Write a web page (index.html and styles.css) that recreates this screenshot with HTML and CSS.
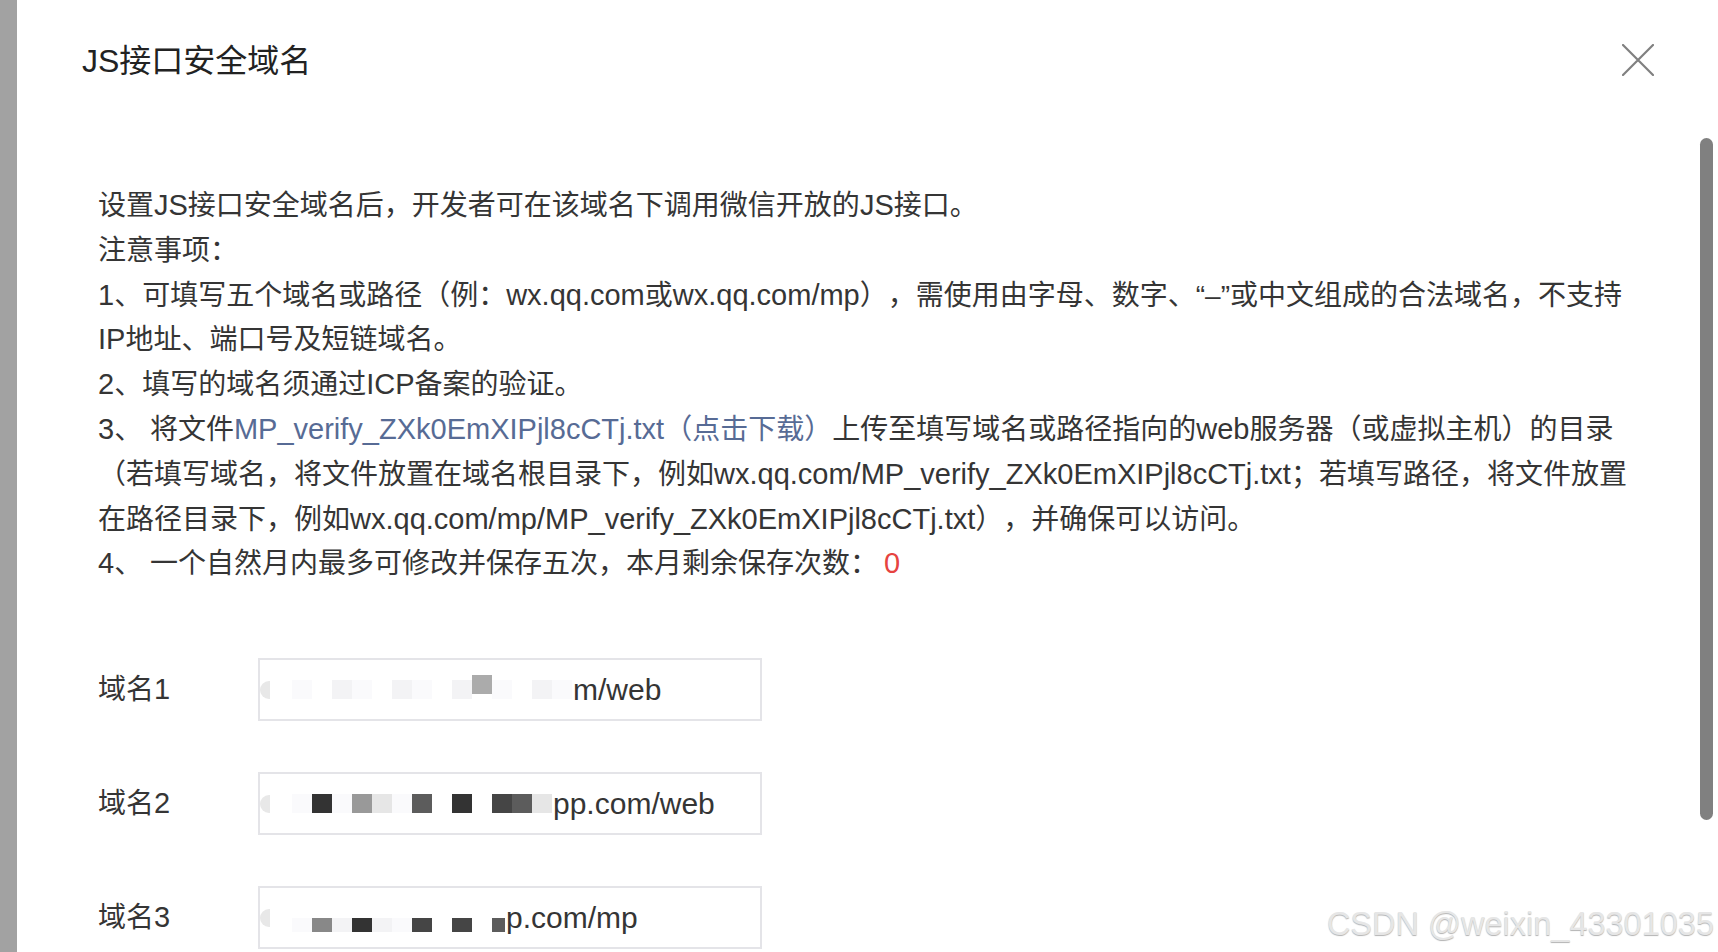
FILE: index.html
```html
<!DOCTYPE html>
<html lang="zh-CN">
<head>
  <meta charset="UTF-8">
  <title>JS接口安全域名</title>
  <link rel="stylesheet" href="styles.css">
</head>
<body>
  <div class="screen">
    <div class="backdrop"></div>

    <div class="dialog">
      <div class="dialog-head">
        <h2 class="dialog-title">JS接口安全域名</h2>
        <span class="close" title="关闭">
          <svg width="32" height="32" viewBox="0 0 32 32">
            <path d="M1 1 L31 31 M31 1 L1 31" stroke="#808080" stroke-width="2.2" stroke-linecap="round" fill="none"/>
          </svg>
        </span>
      </div>

      <div class="dialog-body">
        <div class="notes">
          <p>设置<span class="en">JS</span>接口安全域名后，开发者可在该域名下调用微信开放的<span class="en">JS</span>接口。</p>
          <p>注意事项：</p>
          <p><span class="en">1</span>、可填写五个域名或路径（例：<span class="en">wx.qq.com</span>或<span class="en">wx.qq.com/mp</span>），需使用由字母、数字、“–”或中文组成的合法域名，不支持<br><span class="en">IP</span>地址、端口号及短链域名。</p>
          <p><span class="en">2</span>、填写的域名须通过<span class="en">ICP</span>备案的验证。</p>
          <p><span class="en">3</span>、 将文件<a class="link" href="#"><span class="en">MP_verify_ZXk0EmXIPjl8cCTj.txt</span>（点击下载）</a>上传至填写域名或路径指向的<span class="en">web</span>服务器（或虚拟主机）的目录<br>（若填写域名，将文件放置在域名根目录下，例如<span class="en">wx.qq.com/MP_verify_ZXk0EmXIPjl8cCTj.txt</span>；若填写路径，将文件放置<br>在路径目录下，例如<span class="en">wx.qq.com/mp/MP_verify_ZXk0EmXIPjl8cCTj.txt</span>），并确保可以访问。</p>
          <p><span class="en">4</span>、 一个自然月内最多可修改并保存五次，本月剩余保存次数：<span class="count">0</span></p>
        </div>

        <div class="domains">
          <div class="domain-row">
            <label class="domain-label">域名<span class="en">1</span></label>
            <div class="domain-input">
              <span class="blob"></span>
              <span class="cell c0"></span><span class="cell c1"></span><span class="cell c0"></span><span class="cell c2"></span><span class="cell c1"></span><span class="cell c0"></span><span class="cell c2"></span><span class="cell c1"></span><span class="cell c0"></span><span class="cell c2"></span><span class="cell c5 up"></span><span class="cell c1"></span><span class="cell c0"></span><span class="cell c2"></span><span class="cell c1"></span>
              <span class="value">m/web</span>
            </div>
          </div>

          <div class="domain-row">
            <label class="domain-label">域名<span class="en">2</span></label>
            <div class="domain-input">
              <span class="blob"></span>
              <span class="cell c0"></span><span class="cell c1"></span><span class="cell c3"></span><span class="cell c1"></span><span class="cell c6"></span><span class="cell c9"></span><span class="cell c1"></span><span class="cell c7"></span><span class="cell c0"></span><span class="cell c3"></span><span class="cell c0"></span><span class="cell c4"></span><span class="cell c7"></span><span class="cell c9"></span>
              <span class="value">pp.com/web</span>
            </div>
          </div>

          <div class="domain-row">
            <label class="domain-label">域名<span class="en">3</span></label>
            <div class="domain-input">
              <span class="blob"></span>
              <span class="cell c0 low"></span><span class="cell c1 low"></span><span class="cell c8 low"></span><span class="cell c2 low"></span><span class="cell c3 low"></span><span class="cell c2 low"></span><span class="cell c1 low"></span><span class="cell c4 low"></span><span class="cell c0 low"></span><span class="cell c4 low"></span><span class="cell c0 low"></span><span class="cell c7 low narrow"></span>
              <span class="value">p.com/mp</span>
            </div>
          </div>
        </div>
      </div>

      <div class="scrollbar"></div>
      <div class="watermark">CSDN @weixin_43301035</div>
    </div>
  </div>
</body>
</html>
```

FILE: styles.css
```css
body {
  margin: 0;
  font-family: "Liberation Sans", "Noto Sans CJK SC", sans-serif;
  color: #353535;
  background: #fff;
  text-spacing-trim: space-all;
}

.screen {
  display: flex;
  height: 952px;
  overflow: hidden;
}

.backdrop {
  flex: none;
  width: 17px;
  background: #a2a2a2;
}

.dialog {
  flex: 1;
  position: relative;
  padding-left: 65px;
}

.dialog-head {
  display: flex;
  align-items: center;
  justify-content: space-between;
  padding: 41px 64px 0 0;
  height: 40px;
}

.dialog-title {
  margin: 0;
  font-size: 32px;
  font-weight: normal;
  line-height: 40px;
  color: #222;
}

.close {
  display: block;
  width: 32px;
  height: 32px;
  margin-top: -2px;
  cursor: pointer;
}

.dialog-body {
  padding: 103px 0 0 16px;
}

.notes {
  font-size: 28px;
  line-height: 44.8px;
  white-space: nowrap;
}

.notes p {
  margin: 0;
}

.en {
  font-size: 29px;
  line-height: 1;
}

.link {
  color: #576b95;
  text-decoration: none;
}

.count {
  color: #e64340;
  padding-left: 6px;
  font-size: 29px;
  line-height: 1;
}

.domains {
  margin-top: 71px;
  display: flex;
  flex-direction: column;
  gap: 51px;
}

.domain-row {
  display: flex;
  align-items: center;
}

.domain-label {
  width: 160px;
  margin-top: -5px;
  font-size: 28px;
}

.domain-input {
  box-sizing: border-box;
  width: 504px;
  height: 63px;
  border: 2px solid #e4e4e8;
  display: flex;
  align-items: center;
  font-size: 30px;
  color: #353535;
}

.blob {
  width: 10px;
  height: 18px;
  border-radius: 9px 0 0 9px;
  background: #e8e8e8;
  margin-right: 2px;
}

.cell {
  width: 20px;
  height: 19px;
}

.cell.up { margin-top: -10px; }
.cell.low { margin-top: 14px; height: 14px; }
.cell.narrow { width: 13px; }

.c0 { background: #fff; }
.c1 { background: #fafafc; }
.c2 { background: #f3f3f5; }
.c3 { background: #333; }
.c4 { background: #454545; }
.c5 { background: #ababab; }
.c6 { background: #999; }
.c7 { background: #5c5c5c; }
.c8 { background: #888; }
.c9 { background: #e6e6e6; }

.value {
  margin-left: 1px;
}

.scrollbar {
  position: absolute;
  top: 138px;
  right: 5px;
  width: 13px;
  height: 682px;
  border-radius: 7px;
  background: #808080;
}

.watermark {
  position: absolute;
  right: 4px;
  bottom: 9px;
  font-family: "Liberation Sans", sans-serif;
  font-size: 32.5px;
  color: #e6e6e6;
  text-shadow: 0 1px 1px rgba(0, 0, 0, 0.3);
}
```
